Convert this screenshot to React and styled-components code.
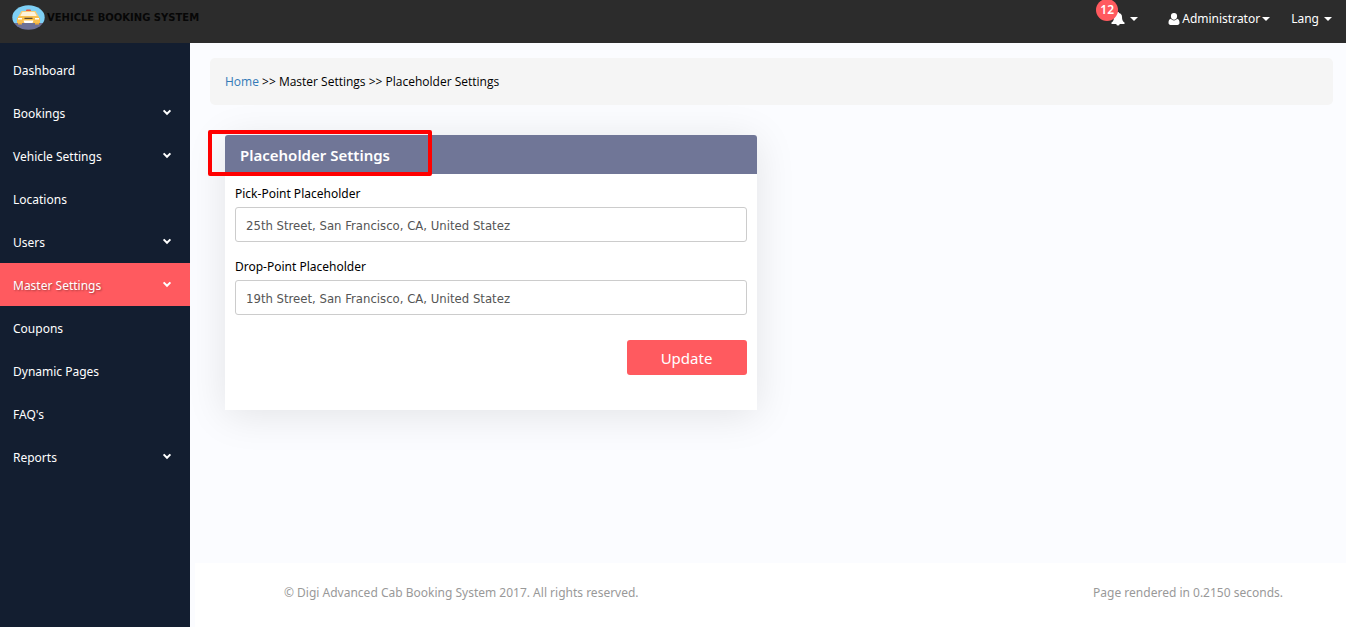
import React from "react";
import styled, { createGlobalStyle, css } from "styled-components";

const sans = `"Noto Sans", "Open Sans", sans-serif`;
const lightSans = `"Open Sans", "Noto Sans", sans-serif`;
const inputFont = `"DejaVu Sans Condensed", "DejaVu Sans", sans-serif`;

const GlobalStyle = createGlobalStyle`
  *, *::before, *::after { box-sizing: border-box; }
  body { margin: 0; background: #fbfcff; font-family: ${sans}; font-size: 12px; line-height: 20px; color: #000; }
  a { text-decoration: none; }
`;

const Page = styled.div`
  min-height: 100vh;
  display: flex;
  flex-direction: column;
`;

const TopBar = styled.header`
  display: flex;
  align-items: flex-start;
  justify-content: space-between;
  height: 43px;
  padding: 5px 14px 0 12px;
  background: #2c2c2c;
`;

const Brand = styled.a`
  display: flex;
  align-items: center;
  gap: 2px;
  color: #070707;
  white-space: nowrap;
`;

const BrandName = styled.span`
  padding-top: 1px;
  font: 700 10px/24px "DejaVu Sans", sans-serif;
`;

const TopNav = styled.nav`
  display: flex;
  align-items: stretch;
  padding-top: 3px;
  gap: 21px;
`;

const NavButton = styled.button`
  position: relative;
  display: flex;
  align-items: center;
  gap: ${(p) => p.$gap || 2}px;
  height: 22px;
  padding: 0;
  border: 0;
  background: none;
  color: #fff;
  font: 12px/20px ${sans};
  margin-right: ${(p) => p.$after || 0}px;
`;

const Count = styled.span`
  position: absolute;
  left: -15px;
  top: -9px;
  width: 22px;
  height: 22px;
  border-radius: 50%;
  background: #ff5a5f;
  font: 600 12px/22px ${sans};
  text-align: center;
`;

const Body = styled.div`
  flex: 1;
  display: flex;
`;

const Sidebar = styled.nav`
  flex: 0 0 190px;
  padding-top: 5px;
  background: #131e30;
`;

const Menu = styled.ul`
  margin: 0;
  padding: 0;
  list-style: none;
`;

const MenuLink = styled.a`
  display: flex;
  align-items: center;
  justify-content: space-between;
  height: 43px;
  padding: 0 18px 0 13px;
  color: #fff;
  ${(p) =>
    p.$active &&
    css`
      background: #ff5a5f;
      text-shadow: 1px 1px 2px rgba(0, 0, 0, 0.35);
    `}
`;

const MenuText = styled.span`
  padding-top: 2px;
`;

const Content = styled.div`
  flex: 1;
  min-width: 0;
  display: flex;
  flex-direction: column;
`;

const Main = styled.main`
  flex: 1;
  padding: 15px 13px 0 20px;
`;

const Breadcrumb = styled.nav`
  padding: 14px 15px 13px;
  border-radius: 5px;
  background: #f5f5f5;
  font: 12px/20px ${lightSans};
  margin-bottom: 30px;
`;

const HomeLink = styled.a`
  color: #337ab7;
`;

const Column = styled.div`
  width: 50%;
  padding: 0 15px;
`;

const Card = styled.section`
  position: relative;
  border-radius: 3px 3px 0 0;
  background: #fff;
  box-shadow: 0 5px 40px rgba(0, 0, 0, 0.1);
`;

const CardTitle = styled.h1`
  margin: 0;
  padding: 1px 15px 0;
  border-radius: 3px 3px 0 0;
  background: #707697;
  color: #fff;
  font: 600 15px/38px ${sans};
`;

const Highlight = styled.div`
  position: absolute;
  left: -17px;
  top: -5px;
  width: 224px;
  height: 46px;
  border: 4px solid #f00;
  border-radius: 2px;
`;

const Form = styled.form`
  padding: 10px 10px 35px;
`;

const Field = styled.div`
  display: flex;
  flex-direction: column;
  gap: 3px;
  margin-bottom: 15px;
`;

const Label = styled.label`
  line-height: 20px;
`;

const Input = styled.input`
  width: 100%;
  height: 35px;
  padding: 2px 10px 0;
  border: 1px solid #ccc;
  border-radius: 3px;
  background: #fff;
  color: #555;
  font: 13px/20px ${inputFont};
`;

const Actions = styled.div`
  display: flex;
  justify-content: flex-end;
  padding-top: 10px;
`;

const UpdateButton = styled.button`
  width: 120px;
  height: 35px;
  border: 0;
  border-radius: 3px;
  background: #ff5a5f;
  color: #fff;
  font: 15px/24px ${sans};
`;

const Footer = styled.footer`
  display: flex;
  align-items: center;
  justify-content: space-between;
  height: 64px;
  margin-left: 5px;
  padding: 0 63px 4px 89px;
  background: #fff;
  color: #999;
`;

const Caret = () => (
  <svg width="8" height="4" viewBox="0 0 8 4" aria-hidden="true">
    <path d="M0 0h8L4 4z" fill="#fff" />
  </svg>
);

const Chevron = () => (
  <svg width="10" height="8" viewBox="0 0 10 8" aria-hidden="true">
    <path d="M1.6 1.400 5 4.800 8.400 1.400" fill="none" stroke="#fff" strokeWidth="2" />
  </svg>
);

const Bell = () => (
  <svg width="14" height="14" viewBox="0 0 14 14" fill="#fff" aria-hidden="true">
    <path d="M7 0c.7 0 1 .4 1 1 2 .4 3 2 3 4 0 3 .9 4.500 2.500 5.600V12H.5v-1.400C2.100 9.500 3 8 3 5c0-2 1-3.600 3-4 0-.6.3-1 1-1zM5.300 12h3.400A1.700 1.700 0 0 1 7 13.600 1.700 1.700 0 0 1 5.300 12z" />
  </svg>
);

const Person = () => (
  <svg width="12" height="12" viewBox="0 0 12 12" fill="#fff" aria-hidden="true">
    <path d="M6 0a3.100 3.100 0 0 1 3.100 3.200C9.100 5.200 7.800 6.700 6 6.700S2.900 5.200 2.900 3.200A3.100 3.100 0 0 1 6 0zM3 5.800C3.700 6.900 4.800 7.500 6 7.500S8.300 6.900 9 5.800c1.800.2 2.500 2 2.500 4 0 1.300-.8 2.200-2 2.200h-7c-1.200 0-2-.9-2-2.200 0-2 .7-3.800 2.500-4z" />
  </svg>
);

const TaxiLogo = () => (
  <svg width="33" height="25" viewBox="0 0 33 25" aria-hidden="true">
    <clipPath id="logo-disc"><ellipse cx="16.500" cy="12.500" rx="16.200" ry="12.200" /></clipPath>
    <g clipPath="url(#logo-disc)">
      <path fill="#7ed0f6" d="M0 0h33v18H0z" />
      <path fill="#6d7197" d="M0 18h33v7H0z" />
      <rect x="14" y="4.500" width="5" height="2" rx="1" fill="#e8573f" />
      <path fill="#f9cf78" d="M9.500 6h14l3.500 6H6z" />
      <path fill="#fff3dc" d="M10.500 7h12l2.200 4H8.300z" />
      <path fill="#f8c050" d="M7 11h19l2 2.500V18H5v-4.500z" />
      <path fill="#eba93a" d="M6 18h4v1.500H6zM23 18h4v1.500h-4z" />
      <path fill="#fff" d="M11.500 15.500h10l-1 2.500h-8zM6 13h4v1.500H6zM23 13h4v1.500h-4z" />
      <path fill="#5b4a35" d="M12.500 12.800h8v1.200h-8z" />
    </g>
  </svg>
);

const items = [
  ["Dashboard"],
  ["Bookings", true],
  ["Vehicle Settings", true],
  ["Locations"],
  ["Users", true],
  ["Master Settings", true],
  ["Coupons"],
  ["Dynamic Pages"],
  ["FAQ's"],
  ["Reports", true],
];

export default function App() {
  return (
    <Page>
      <GlobalStyle />
      <TopBar>
        <Brand href="#">
          <TaxiLogo />
          <BrandName>VEHICLE BOOKING SYSTEM</BrandName>
        </Brand>
        <TopNav>
          <NavButton type="button" $gap={5} $after={9} aria-label="Notifications">
            <Bell /><Count>12</Count><Caret />
          </NavButton>
          <NavButton type="button"><Person />Administrator<Caret /></NavButton>
          <NavButton type="button" $gap={5}>Lang<Caret /></NavButton>
        </TopNav>
      </TopBar>
      <Body>
        <Sidebar>
          <Menu>
            {items.map(([name, expandable]) => (
              <li key={name}>
                <MenuLink href="#" $active={name === "Master Settings"}>
                  <MenuText>{name}</MenuText>
                  {expandable && <Chevron />}
                </MenuLink>
              </li>
            ))}
          </Menu>
        </Sidebar>
        <Content>
          <Main>
            <Breadcrumb>
              <HomeLink href="#">Home</HomeLink> &gt;&gt; Master Settings &gt;&gt; Placeholder Settings
            </Breadcrumb>
            <Column>
              <Card>
                <CardTitle>Placeholder Settings</CardTitle>
                <Highlight />
                <Form>
                  <Field>
                    <Label htmlFor="pick">Pick-Point Placeholder</Label>
                    <Input id="pick" defaultValue="25th Street, San Francisco, CA, United Statez" />
                  </Field>
                  <Field>
                    <Label htmlFor="drop">Drop-Point Placeholder</Label>
                    <Input id="drop" defaultValue="19th Street, San Francisco, CA, United Statez" />
                  </Field>
                  <Actions>
                    <UpdateButton type="button">Update</UpdateButton>
                  </Actions>
                </Form>
              </Card>
            </Column>
          </Main>
          <Footer>
            <span>© Digi Advanced Cab Booking System 2017. All rights reserved.</span>
            <span>Page rendered in 0.2150 seconds.</span>
          </Footer>
        </Content>
      </Body>
    </Page>
  );
}
